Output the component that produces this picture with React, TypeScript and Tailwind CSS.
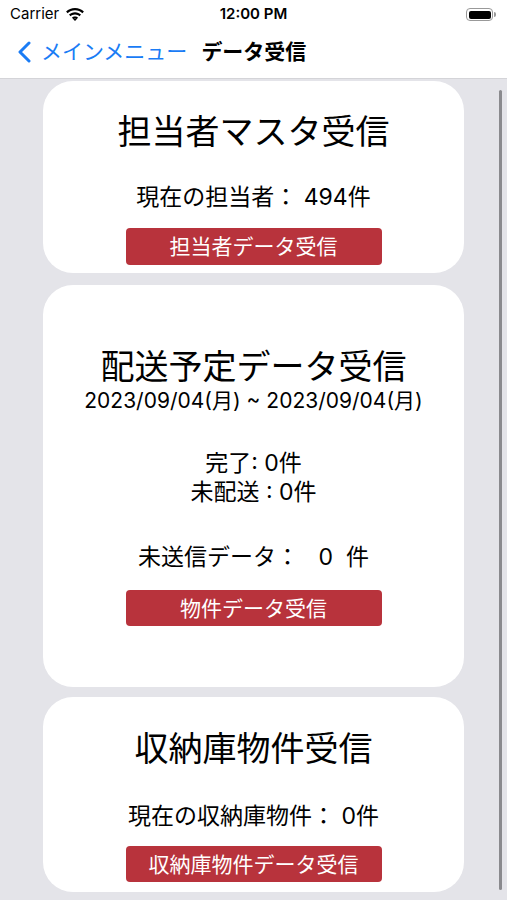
import React from 'react';

const JP = "font-['Inter','Noto_Sans_CJK_JP',sans-serif]";

function WifiIcon() {
  return (
    <svg width="20" height="15" viewBox="0 0 20 15" className="ml-[6px]">
      <path d="M10 3.2c2.9 0 5.5 1.1 7.4 3l1.5-1.6C16.6 2.3 13.5 1 10 1S3.4 2.3 1.1 4.6l1.5 1.6c1.9-1.9 4.5-3 7.4-3z" fill="#000" />
      <path d="M10 7.4c1.8 0 3.4.7 4.5 1.8l1.5-1.6C14.5 6.1 12.4 5.2 10 5.2S5.5 6.1 4 7.6l1.5 1.6c1.1-1.1 2.7-1.8 4.5-1.8z" fill="#000" />
      <path d="M10 11.5c.7 0 1.3.3 1.7.7L10 14l-1.7-1.8c.4-.4 1-.7 1.7-.7z" fill="#000" />
      <path d="M10 9.4c1.2 0 2.3.5 3.1 1.2l-1.4 1.6c-.4-.4-1-.7-1.7-.7s-1.3.3-1.7.7L6.9 10.6c.8-.7 1.9-1.2 3.1-1.2z" fill="#000" />
    </svg>
  );
}

function Battery() {
  return (
    <div className="flex items-center">
      <div className="flex h-[13px] w-[27px] items-center rounded-[4px] border border-[#999] p-[1.5px]">
        <div className="h-full w-full rounded-[2px] bg-black" />
      </div>
      <div className="ml-[1px] h-[5px] w-[2px] rounded-r-sm bg-[#999]" />
    </div>
  );
}

function RedButton({ label, className = '' }: { label: string; className?: string }) {
  return (
    <button
      className={`flex w-[256px] items-center justify-center rounded-[4px] bg-[#b8333c] text-[21px] leading-none text-white ${className}`}
    >
      {label}
    </button>
  );
}

export default function App() {
  return (
    <div className={`relative flex h-[900px] w-full flex-col overflow-hidden bg-white ${JP}`}>
      {/* status bar */}
      <div className="flex h-[28px] items-center justify-between px-[10px] pt-[1px]">
        <div className="flex w-[120px] items-center">
          <span className="text-[15px] text-black">Carrier</span>
          <WifiIcon />
        </div>
        <span className="text-[15px] font-semibold text-black">12:00 PM</span>
        <div className="flex w-[120px] justify-end pr-[1px]">
          <Battery />
        </div>
      </div>

      {/* nav bar */}
      <div className="flex h-[51px] items-center border-b border-[#d4d4d8] pb-[2px]">
        <svg width="14" height="22" viewBox="0 0 14 22" className="ml-[17px]">
          <path d="M12 2L3 11l9 9" fill="none" stroke="#1a7cf5" strokeWidth="3" strokeLinecap="round" strokeLinejoin="round" />
        </svg>
        <span className="ml-[10px] text-[21px] text-[#1a7cf5]">メインメニュー</span>
        <span className="ml-[14px] text-[21px] font-semibold text-black">データ受信</span>
      </div>

      {/* content */}
      <div className="flex flex-1 flex-col gap-[12px] bg-[#e4e4e9] px-[43px] pt-[2px]">
        <div className="flex flex-col items-center rounded-[30px] bg-white pt-[31px] pb-[8px] text-black">
          <div className="text-[34px] leading-[40px]">担当者マスタ受信</div>
          <div className="mt-[30px] text-[23px] leading-[30px]">現在の担当者：&nbsp;494件</div>
          <RedButton label="担当者データ受信" className="mt-[16px] h-[37px]" />
        </div>

        <div className="flex flex-col items-center rounded-[30px] bg-white pt-[62px] pb-[61px] text-black">
          <div className="text-[34px] leading-[40px]">配送予定データ受信</div>
          <div className="text-[21px] leading-[28px]">2023/09/04(月) ~ 2023/09/04(月)</div>
          <div className="mt-[34px] text-[23px] leading-[29px]">完了: 0件</div>
          <div className="text-[23px] leading-[29px]">未配送 : 0件</div>
          <div className="mt-[35px] text-[23px] leading-[30px]">未送信データ：&nbsp;&nbsp;&nbsp;0&nbsp;&nbsp;件</div>
          <RedButton label="物件データ受信" className="mt-[18px] h-[36px]" />
        </div>

        <div className="-mt-[2px] flex flex-col items-center rounded-[30px] bg-white pt-[32px] pb-[10px] text-black">
          <div className="text-[34px] leading-[40px]">収納庫物件受信</div>
          <div className="mt-[32px] text-[23px] leading-[30px]">現在の収納庫物件：&nbsp;0件</div>
          <RedButton label="収納庫物件データ受信" className="mt-[15px] h-[36px]" />
        </div>
      </div>

      {/* scroll indicator */}
      <div className="absolute top-[90px] right-[5px] h-[800px] w-[3px] rounded-full bg-[#8a8a8e]" />
    </div>
  );
}
